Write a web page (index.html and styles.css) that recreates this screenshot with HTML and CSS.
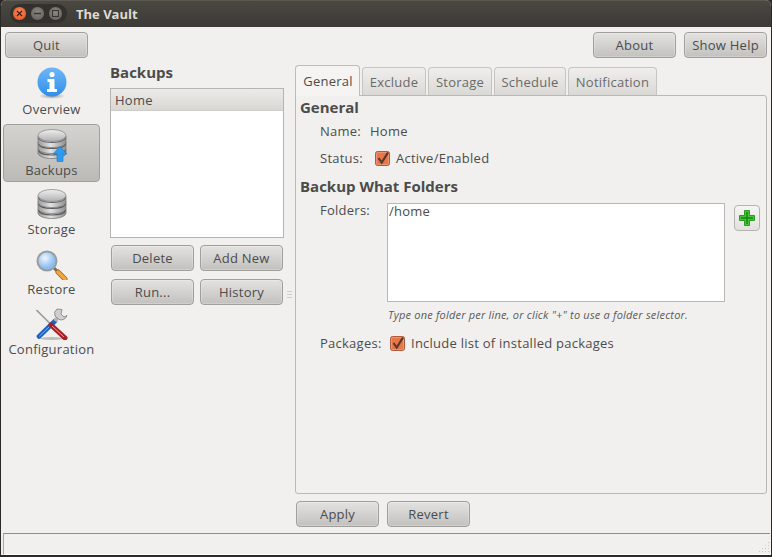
FILE: index.html
```html
<!DOCTYPE html>
<html lang="en">
<head>
<meta charset="utf-8">
<title>The Vault</title>
<link rel="stylesheet" href="styles.css">
</head>
<body>
<svg class="defs" width="0" height="0" aria-hidden="true">
  <defs>
    <linearGradient id="disk" x1="0" x2="1" y1="0" y2="0">
      <stop offset="0" stop-color="#9a9a9c"/><stop offset=".45" stop-color="#e2e2e2"/><stop offset="1" stop-color="#8e8e8e"/>
    </linearGradient>
    <linearGradient id="diskTop" x1="0" x2="0" y1="0" y2="1">
      <stop offset="0" stop-color="#efefef"/><stop offset="1" stop-color="#b0b0b0"/>
    </linearGradient>
    <symbol id="stack" viewBox="0 0 32 32">
      <path d="M2 21v4c0 3 6 5.500 14 5.500S30 28 30 25v-4z" fill="url(#disk)" stroke="#707070" stroke-width=".7"/>
      <path d="M2 14.500v6c0 3 6 5 14 5s14-2 14-5v-6z" fill="url(#disk)" stroke="#707070" stroke-width=".7"/>
      <path d="M2.500 16c1 3 7 4.500 13.500 4.500S28.500 19 29.500 16M2.500 22.500c1 3 7 4.500 13.500 4.500s12.500-1.500 13.500-4.500" fill="none" stroke="#5a5a5a" stroke-width="1.100"/>
      <path d="M2 8v6.500c0 3 6 5 14 5s14-2 14-5V8z" fill="url(#disk)" stroke="#707070" stroke-width=".7"/>
      <path d="M2.500 10c1 3 7 4.500 13.500 4.500S28.500 13 29.500 10" fill="none" stroke="#666" stroke-width="1"/>
      <ellipse cx="16" cy="7.500" rx="14" ry="6" fill="url(#diskTop)" stroke="#808080" stroke-width=".7"/>
    </symbol>
    <symbol id="check" viewBox="0 0 15 15">
      <rect x=".5" y=".5" width="14" height="14" rx="2" fill="#e8764a" stroke="#aa5c3e"/>
      <rect x="1.500" y="1.500" width="12" height="12" rx="1" fill="none" stroke="#f2a27f" stroke-width=".7"/>
      <path d="M3.500 7l3.200 4.500L13 1.500" fill="none" stroke="#55392c" stroke-width="2.100"/>
    </symbol>
  </defs>
</svg>
<div class="window">
  <header class="titlebar">
    <div class="controls">
      <span class="wbtn close">
        <svg width="7" height="7" viewBox="0 0 7 7"><path d="M1 1l5 5M6 1L1 6" stroke="#4a1c0a" stroke-width="1.300"/></svg>
      </span>
      <span class="wbtn">
        <svg width="7" height="7" viewBox="0 0 7 7"><path d="M0 3.500h7" stroke="#38352f" stroke-width="1.300"/></svg>
      </span>
      <span class="wbtn">
        <svg width="7" height="7" viewBox="0 0 7 7"><rect x=".5" y=".5" width="6" height="6" fill="none" stroke="#38352f"/></svg>
      </span>
    </div>
    <span class="title">The Vault</span>
  </header>

  <div class="toolbar">
    <button class="btn">Quit</button>
    <div class="toolbar-right">
      <button class="btn">About</button>
      <button class="btn">Show Help</button>
    </div>
  </div>

  <div class="main">
    <nav class="sidebar">
      <div class="nav-item">
        <svg class="nav-icon info-icon" width="32" height="34" viewBox="0 0 32 34">
          <defs>
            <linearGradient id="info" x1="0" x2="0" y1="0" y2="1"><stop offset="0" stop-color="#6fb6f6"/><stop offset="1" stop-color="#2f8fec"/></linearGradient>
            <radialGradient id="shade"><stop offset="0" stop-color="#555" stop-opacity=".6"/><stop offset="1" stop-color="#555" stop-opacity="0"/></radialGradient>
          </defs>
          <ellipse cx="16" cy="29" rx="13" ry="3" fill="url(#shade)"/>
          <circle cx="16" cy="15" r="14.500" fill="url(#info)"/>
          <circle cx="16" cy="7.500" r="2.600" fill="#fff"/>
          <path d="M11.500 12h7v10h2.500v3H11v-3h2.500v-7h-2z" fill="#fff"/>
        </svg>
        <span>Overview</span>
      </div>
      <div class="nav-item active">
        <span class="icon-wrap">
          <svg class="nav-icon" width="32" height="32"><use href="#stack"/></svg>
          <svg class="badge" width="16" height="16" viewBox="0 0 16 16"><path d="M8 .5l7 7.500h-4v7.500H5V8H1z" fill="#2f9bf0" stroke="#1a78cc" stroke-width=".6"/></svg>
        </span>
        <span>Backups</span>
      </div>
      <div class="nav-item">
        <svg class="nav-icon" width="32" height="32"><use href="#stack"/></svg>
        <span>Storage</span>
      </div>
      <div class="nav-item">
        <svg class="nav-icon" width="32" height="32" viewBox="0 0 32 32">
          <defs>
            <radialGradient id="lens" cx=".4" cy=".35"><stop offset="0" stop-color="#eef6fe"/><stop offset="1" stop-color="#8dbef0"/></radialGradient>
          </defs>
          <path d="M18 20l3 3" stroke="#6e6e6e" stroke-width="3"/>
          <path d="M22 24l7 7" stroke="#a5651f" stroke-width="5" stroke-linecap="round"/>
          <path d="M22 24l7 7" stroke="#f4a63a" stroke-width="3.400" stroke-linecap="round"/>
          <circle cx="11" cy="13" r="9.500" fill="url(#lens)" stroke="#9a9da0" stroke-width="2"/>
        </svg>
        <span>Restore</span>
      </div>
      <div class="nav-item">
        <svg class="nav-icon" width="32" height="32" viewBox="0 0 32 32">
          <ellipse cx="16" cy="30.500" rx="12" ry="1.500" fill="#888" opacity=".5"/>
          <path d="M.5 2L14 15.500" stroke="#9a9a9a" stroke-width="1.600"/>
          <path d="M3 28.500L19 13" stroke="#1f62c0" stroke-width="4.600" stroke-linecap="round"/>
          <path d="M3.500 28L15 17" stroke="#7fb0ee" stroke-width="1"/>
          <path d="M19 13l3-4" stroke="#b5b5b5" stroke-width="3.600"/>
          <path d="M21 1a6 6 0 0 0-2 7l4 3.500a6 6 0 0 0 8-4l-3 1.500-3-3 1-4.500z" fill="#cfcfcf" stroke="#7d7d7d" stroke-width=".8"/>
          <path d="M15 17l14 13" stroke="#ab1f24" stroke-width="5" stroke-linecap="round"/>
          <path d="M16 18l12 11" stroke="#ec9c9e" stroke-width="1"/>
        </svg>
        <span>Configuration</span>
      </div>
    </nav>

    <section class="backups">
      <h2 class="backups-title">Backups</h2>
      <div class="list">
        <div class="list-head">Home</div>
      </div>
      <div class="backup-actions">
        <button class="btn">Delete</button>
        <button class="btn">Add New</button>
        <button class="btn">Run...</button>
        <button class="btn">History</button>
      </div>
    </section>

    <div class="grip"><i></i><i></i><i></i></div>

    <section class="content">
      <div class="tabs">
        <div class="tab current">General</div>
        <div class="tab w64">Exclude</div>
        <div class="tab w64">Storage</div>
        <div class="tab w72">Schedule</div>
        <div class="tab w89">Notification</div>
      </div>
      <div class="panel">
        <h3 class="group">General</h3>
        <div class="row name-row">
          <span class="label">Name:</span>
          <span>Home</span>
        </div>
        <div class="row status-row">
          <span class="label">Status:</span>
          <svg class="checkbox" width="15" height="15"><use href="#check"/></svg>
          <span>Active/Enabled</span>
        </div>
        <h3 class="group what">Backup What Folders</h3>
        <div class="folders">
          <span class="label">Folders:</span>
          <div class="textarea">/home</div>
          <button class="add" aria-label="Add folder">
            <svg width="18" height="18" viewBox="0 0 18 18">
              <path d="M6.500 1.500h5v5h5v5h-5v5h-5v-5h-5v-5h5z" fill="#4cc23a" stroke="#2a9a22" stroke-linejoin="round"/>
              <path d="M9 3v12M3 9h12" stroke="#118a10" stroke-width="1.500"/>
            </svg>
          </button>
        </div>
        <p class="hint">Type one folder per line, or click "+" to use a folder selector.</p>
        <div class="row packages-row">
          <span class="label">Packages:</span>
          <svg class="checkbox" width="15" height="15"><use href="#check"/></svg>
          <span>Include list of installed packages</span>
        </div>
      </div>
      <div class="apply-row">
        <button class="btn">Apply</button>
        <button class="btn">Revert</button>
      </div>
    </section>
  </div>

  <footer class="statusbar">
    <svg class="resize" width="13" height="13" viewBox="0 0 13 13">
      <path d="M11 1h1v1h-1zM8 4h1v1H8zM11 4h1v1h-1zM5 7h1v1H5zM8 7h1v1H8zM11 7h1v1h-1zM2 10h1v1H2zM5 10h1v1H5zM8 10h1v1H8zM11 10h1v1h-1z" fill="#c9c8c4"/>
    </svg>
  </footer>
</div>
</body>
</html>
```

FILE: styles.css
```css
* { box-sizing: border-box; }

html, body {
  margin: 0;
  padding: 0;
}

body {
  width: 772px;
  height: 557px;
  overflow: hidden;
  background: #2c2a27;
  font-family: "Open Sans", "Noto Sans", "Liberation Sans", sans-serif;
  font-size: 13px;
  letter-spacing: .25px;
  color: #4c4c4c;
}

.defs { position: absolute; }

.window {
  width: 772px;
  height: 557px;
  display: flex;
  flex-direction: column;
  background: #f1f0ee;
  border-left: 1px solid #2c2a27;
  border-right: 1px solid #2c2a27;
  border-bottom: 2px solid #2c2a27;
  border-radius: 6px 6px 0 0;
  overflow: hidden;
}

.titlebar {
  height: 27px;
  flex: none;
  display: flex;
  align-items: center;
  padding: 0 0 1px 9px;
  background: linear-gradient(#4b4842, #3c3a35);
  border-top: 1px solid #5c5953;
}

.controls {
  display: flex;
  gap: 3px;
  width: 57px;
  margin-right: 9px;
  padding: 2px;
  flex: none;
  border-radius: 10px;
  background: #33312d;
}

.wbtn {
  width: 15px;
  height: 15px;
  border-radius: 50%;
  display: flex;
  align-items: center;
  justify-content: center;
  background: radial-gradient(circle at 50% 40%, #8a8780, #5f5c56);
  border: 1px solid #33312d;
}

.wbtn.close {
  background: radial-gradient(circle at 50% 40%, #f58a5c, #e2501c);
}

.title {
  color: #dfdbd2;
  font-size: 13px;
  font-weight: 700;
  letter-spacing: 0;
}

.btn {
  width: 83px;
  height: 26px;
  padding: 0;
  border: 1px solid #a09f9b;
  border-radius: 4px;
  background: linear-gradient(#e3e2e0, #c2c1be);
  box-shadow: inset 0 0 0 1px rgba(255, 255, 255, .22);
  font: inherit;
  letter-spacing: inherit;
  color: #4c4c4c;
}

.toolbar {
  height: 31px;
  flex: none;
  display: flex;
  justify-content: space-between;
  padding: 5px 4px 0 4px;
}

.toolbar-right {
  display: flex;
  gap: 8px;
}

.main {
  flex: 1;
  min-height: 0;
  display: flex;
  padding-left: 2px;
}

.sidebar {
  width: 97px;
  flex: none;
  display: flex;
  flex-direction: column;
  gap: 2px;
  padding-top: 6px;
}

.nav-item {
  height: 58px;
  display: flex;
  flex-direction: column;
  align-items: center;
  justify-content: flex-start;
  padding-top: 4px;
  line-height: 16px;
  white-space: nowrap;
}

.nav-item.active {
  border: 1px solid #a09f9b;
  border-radius: 4px;
  background: linear-gradient(#d4d3d0, #bbbab7);
  padding-top: 3px;
}

.nav-icon { display: block; flex: none; }
.nav-item > span:last-child { margin-top: 1px; }
.nav-item.active > span:last-child { margin-top: 2px; }
.info-icon { margin-top: -1px; margin-bottom: -1px; }

.icon-wrap {
  position: relative;
  display: block;
  width: 32px;
  height: 32px;
  flex: none;
}

.badge {
  position: absolute;
  right: 0;
  bottom: -2px;
}

.backups {
  width: 174px;
  margin-left: 10px;
  flex: none;
  display: flex;
  flex-direction: column;
}

.backups-title {
  margin: 5px 0 6px;
  font-size: 15px;
  line-height: 19px;
  font-weight: 700;
  letter-spacing: 0;
  color: #4c4c4c;
}

.list {
  height: 150px;
  background: #fff;
  border: 1px solid #b5b4b0;
}

.list-head {
  height: 22px;
  padding-left: 4px;
  line-height: 23px;
  background: linear-gradient(#ecebe9, #d8d7d4);
  border-bottom: 1px solid #cdccc9;
}

.backup-actions {
  display: grid;
  grid-template-columns: 83px 83px;
  column-gap: 6px;
  row-gap: 8px;
  padding: 7px 0 0 1px;
}

.grip {
  width: 11px;
  flex: none;
  display: flex;
  flex-direction: column;
  gap: 1px;
  align-items: center;
  padding-top: 233px;
}

.grip i {
  display: block;
  width: 5px;
  height: 1px;
  margin-bottom: 1px;
  background: #cfcec9;
}

.content {
  flex: 1;
  display: flex;
  flex-direction: column;
  padding-right: 4px;
  min-width: 0;
}

.tabs {
  display: flex;
  align-items: flex-end;
  gap: 2px;
  height: 37px;
  flex: none;
  position: relative;
  z-index: 1;
}

.tab {
  height: 28px;
  display: flex;
  align-items: center;
  justify-content: center;
  border: 1px solid #c6c5c1;
  border-bottom: 0;
  border-radius: 4px 4px 0 0;
  background: linear-gradient(#efeeec, #dad9d6);
  color: #6a6a68;
}

.tab.current {
  width: 65px;
  height: 31px;
  margin-bottom: -1px;
  padding: 0 0 1px 1px;
  background: #f5f4f2;
  border-color: #bdbcb8;
  color: #4c4c4c;
}

.w64 { width: 64px; }
.w72 { width: 72px; }
.w89 { width: 89px; }

.panel {
  height: 399px;
  flex: none;
  border: 1px solid #b9b8b4;
  border-radius: 0 3px 3px 3px;
  padding: 2px 0 0 4px;
}

.group {
  margin: 0;
  font-size: 15px;
  line-height: 19px;
  font-weight: 700;
  letter-spacing: 0;
  color: #4c4c4c;
}

.row {
  display: flex;
  align-items: center;
  white-space: nowrap;
}

.label {
  flex: none;
  color: #4c4c4c;
}

.name-row {
  margin: 5px 0 0 20px;
  height: 18px;
}

.name-row .label { width: 50px; }

.status-row {
  margin: 9px 0 0 20px;
  height: 18px;
}

.status-row .label { width: 55px; }

.checkbox { flex: none; margin-right: 6px; }

.what { margin-top: 10px; }

.folders {
  display: flex;
  margin: 7px 0 0 20px;
  height: 99px;
}

.folders .label {
  width: 67px;
  line-height: 14px;
}

.textarea {
  width: 338px;
  height: 99px;
  background: #fff;
  border: 1px solid #b9b8b4;
  padding: 0 0 0 1px;
  line-height: 15px;
}

.add {
  width: 26px;
  height: 26px;
  margin: 2px 0 0 9px;
  padding: 0;
  display: flex;
  align-items: center;
  justify-content: center;
  background: linear-gradient(#f6f5f4, #e2e1de);
  border: 1px solid #b5b4b0;
  border-radius: 4px;
}

.hint {
  margin: 5px 0 0 88px;
  font-size: 11px;
  line-height: 15px;
  font-style: italic;
  letter-spacing: .2px;
  color: #5a5a5a;
}

.packages-row {
  margin: 12px 0 0 20px;
  height: 18px;
}

.packages-row .label { width: 67px; margin-right: 3px; }

.apply-row {
  display: flex;
  gap: 8px;
  padding: 7px 0 0 1px;
}

.statusbar {
  height: 22px;
  flex: none;
  margin: 6px 1px 0 2px;
  display: flex;
  justify-content: flex-end;
  align-items: flex-end;
  border-top: 1px solid #8e8d89;
  border-left: 1px solid #a8a7a3;
  border-bottom: 1px solid #fff;
}

.resize { display: block; }
```
